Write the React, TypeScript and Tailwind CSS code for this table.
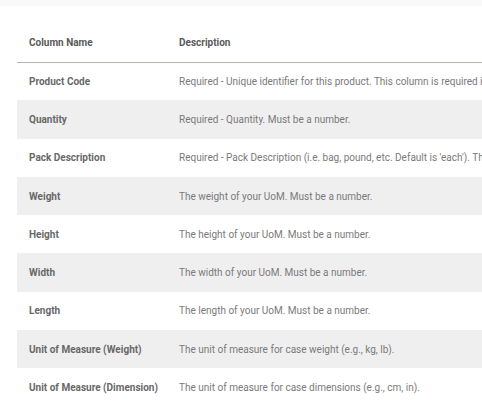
const rows: [string, string][] = [
  ["Product Code", "Required - Unique identifier for this product. This column is required in order to match products."],
  ["Quantity", "Required - Quantity. Must be a number."],
  ["Pack Description", "Required - Pack Description (i.e. bag, pound, etc. Default is 'each'). The description of your UoM."],
  ["Weight", "The weight of your UoM. Must be a number."],
  ["Height", "The height of your UoM. Must be a number."],
  ["Width", "The width of your UoM. Must be a number."],
  ["Length", "The length of your UoM. Must be a number."],
  ["Unit of Measure (Weight)", "The unit of measure for case weight (e.g., kg, lb)."],
  ["Unit of Measure (Dimension)", "The unit of measure for case dimensions (e.g., cm, in)."],
];

export default function App() {
  return (
    <div className="w-[482px] h-[402px] overflow-hidden bg-white font-['Roboto',sans-serif]">
      <div className="h-[6px] bg-[#fafafa]" />
      <div className="pl-[17px] pt-[17px]">
        <table className="w-[700px] border-collapse text-[10px]">
          <thead>
            <tr className="border-b border-[#bdb3af]">
              <th className="h-[39px] w-[162px] pl-3 text-left font-bold text-[#5a5a5a]">Column Name</th>
              <th className="h-[39px] text-left font-bold text-[#5a5a5a]">Description</th>
            </tr>
          </thead>
          <tbody>
            {rows.map(([name, desc], i) => (
              <tr key={name} className={i % 2 === 1 ? "bg-[#efefef]" : "bg-white"}>
                <td className="h-[38.3px] pl-3 font-bold text-[#686868] whitespace-nowrap">{name}</td>
                <td className="h-[38.3px] text-[#7a7a7a] whitespace-nowrap">{desc}</td>
              </tr>
            ))}
          </tbody>
        </table>
      </div>
    </div>
  );
}
